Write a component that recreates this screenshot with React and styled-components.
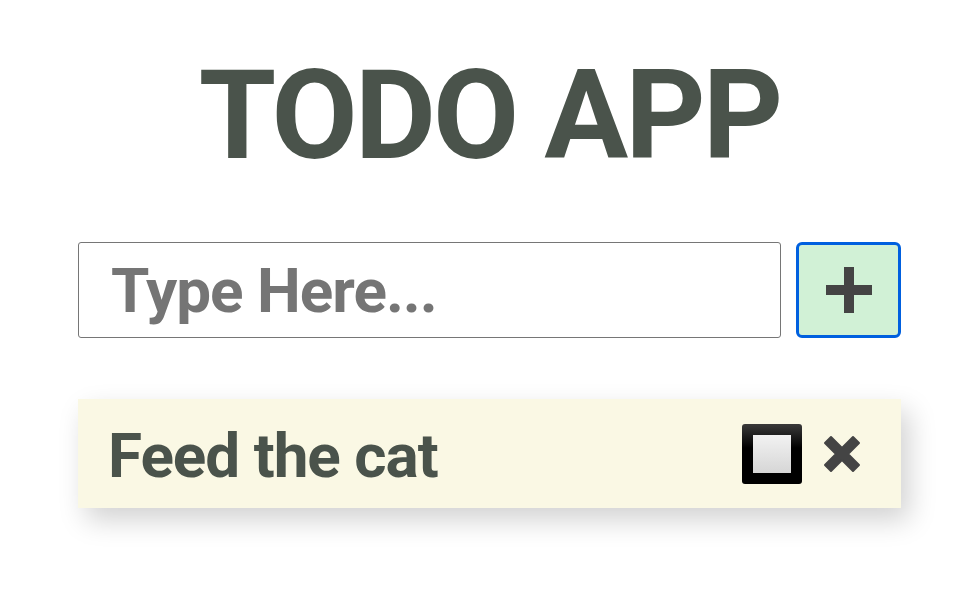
import React, { useState } from 'react';
import styled, { createGlobalStyle } from 'styled-components';

const GlobalStyle = createGlobalStyle`
    body {
        margin: 0;
        background: #ffffff;
        font-family: Roboto, "Liberation Sans", sans-serif;
    }
`;

const Page = styled.div`
    width: 823px;
    margin: 0 auto;
    padding: 41px 0 80px;
`;

const Title = styled.h1`
    margin: 0;
    height: 150px;
    line-height: 150px;
    text-align: center;
    font-size: 125px;
    letter-spacing: -3px;
    font-weight: 700;
    color: #4a534b;
`;

const Form = styled.form`
    display: flex;
    gap: 15px;
    margin-top: 51px;
`;

const Input = styled.input`
    flex: 1;
    min-width: 0;
    width: 0;
    box-sizing: border-box;
    height: 96px;
    padding: 0 32px;
    border: 1px solid #767676;
    border-radius: 3px;
    font-family: Roboto, sans-serif;
    font-size: 62px;
    letter-spacing: -1px;
    font-weight: 700;
    color: #4a534b;
    outline: none;

    &::placeholder {
        color: #757575;
    }
`;

const AddButton = styled.button`
    box-sizing: border-box;
    width: 105px;
    height: 96px;
    border: 3px solid #0060df;
    border-radius: 6px;
    background: #d1f1d6;
    display: flex;
    align-items: center;
    justify-content: center;
    padding: 0;
    cursor: pointer;
`;

const List = styled.ul`
    list-style: none;
    margin: 61px 0 0 0;
    padding: 0;
`;

const Item = styled.li`
    display: flex;
    align-items: center;
    box-sizing: border-box;
    height: 109px;
    padding: 4px 39px 0 30px;
    background: #faf8e4;
    box-shadow: 8px 12px 26px rgba(0, 0, 0, 0.18);
`;

const ItemText = styled.span`
    flex: 1;
    font-size: 62px;
    letter-spacing: -1px;
    font-weight: 700;
    color: #4a534b;
`;

const Check = styled.span`
    box-sizing: border-box;
    width: 60px;
    height: 60px;
    margin: -4px 20px 0 0;
    border-radius: 3px;
    padding: 11px;
    background: linear-gradient(#3a3a3a, #000 40%, #000);
    cursor: pointer;
`;

const CheckInner = styled.span`
    display: block;
    width: 100%;
    height: 100%;
    background: linear-gradient(#f2f2f2, #d6d6d6);
`;

const Remove = styled.span`
    display: flex;
    margin-top: -4px;
    cursor: pointer;
`;

function App() {
    const [todos] = useState(['Feed the cat']);

    return (
        <Page>
            <GlobalStyle />
            <Title>TODO APP</Title>
            <Form onSubmit={e => e.preventDefault()}>
                <Input placeholder="Type Here..." />
                <AddButton type="submit">
                    <svg width="46" height="46" viewBox="0 0 46 46">
                        <path d="M18 0h10v18h18v10H28v18H18V28H0V18h18z" fill="#444" />
                    </svg>
                </AddButton>
            </Form>
            <List>
                {todos.map((el, index) => (
                    <Item key={index}>
                        <ItemText>{el}</ItemText>
                        <Check><CheckInner /></Check>
                        <Remove>
                            <svg width="40" height="40" viewBox="0 0 40 40">
                                <path d="M3 9l6-6 11 11 11-11 6 6-11 11 11 11-6 6-11-11-11 11-6-6 11-11z" fill="#444" strokeLinejoin="round" stroke="#444" strokeWidth="2" />
                            </svg>
                        </Remove>
                    </Item>
                ))}
            </List>
        </Page>
    );
}

export default App;
